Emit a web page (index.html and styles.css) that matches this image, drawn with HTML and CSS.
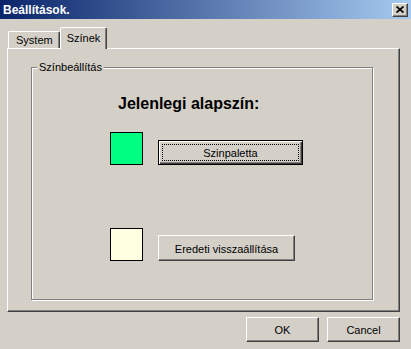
FILE: index.html
```html
<!DOCTYPE html>
<html lang="hu">
<head>
  <meta charset="UTF-8">
  <title>Beállítások.</title>
  <link rel="stylesheet" href="styles.css">
</head>
<body>
  <div class="window">
    <div class="titlebar">
      <div class="caption">Beállítások.</div>
      <div class="close">
        <svg width="8" height="7" viewBox="0 0 8 7"><path d="M0.5 0.5 L7.5 6.5 M7.5 0.5 L0.5 6.5" stroke="#000" stroke-width="1.8" fill="none"/></svg>
      </div>
    </div>
    <div class="content">
      <div class="tabs">
        <div class="tab">System</div>
        <div class="tab active">Színek</div>
      </div>
      <div class="panel">
        <div class="group">
          <div class="legend">Színbeállítás</div>
          <div class="heading">Jelenlegi alapszín:</div>
          <div class="row first">
            <div class="swatch green"></div>
            <div class="btn default wide">Szinpaletta</div>
          </div>
          <div class="row second">
            <div class="swatch cream"></div>
            <div class="btn reset">Eredeti visszaállítása</div>
          </div>
        </div>
      </div>
      <div class="footer">
        <div class="btn small">OK</div>
        <div class="btn small">Cancel</div>
      </div>
    </div>
  </div>
</body>
</html>
```

FILE: styles.css
```css
*{margin: 0; box-sizing: border-box;}
body{
  background: #D4D0C8;
  font-family: "Liberation Sans", Arial, sans-serif;
  font-size: 11px;
  color: #000;
}
.window{
  width: 411px;
  height: 349px;
  overflow: hidden;
}
.titlebar{
  height: 19px;
  display: flex;
  align-items: center;
  justify-content: space-between;
  padding: 0 3px;
  background: linear-gradient(to right, #0A246A, #A6CAF0);
}
.caption{
  color: #fff;font-weight: bold;font-size: 12px;
}
.close{
  width: 16px;
  height: 14px;
  display: flex;
  align-items: center;
  justify-content: center;
  background: #D4D0C8;
  border: 1px solid;
  border-color: #fff #404040 #404040 #fff;
  box-shadow: inset -1px -1px #808080;
}
.content{
  padding: 8px 11px 0 7px;
}
.tabs{
  display: flex;
  align-items: flex-end;
  height: 21px;
  padding-left: 1px;
}
.tab{
  height: 17px;
  padding: 2px 6px 0 7px;
  border: 1px solid;
  border-color: #fff #404040 transparent #fff;
  border-bottom: none;
  border-radius: 2px 2px 0 0;
  box-shadow: inset -1px 0 #808080;
  line-height: 13px;
}
.tab.active{
  height: 22px;
  margin-bottom: -1px;
  padding: 4px 6px 0 6px;
  background: #D4D0C8;
  position: relative;
  z-index: 1;
}
.panel{
  height: 264px;
  display: flex;
  flex-direction: column;
  padding: 18px 26px 11px 23px;
  border: 1px solid;
  border-color: #fff #404040 #404040 #fff;
  box-shadow: inset -1px -1px #808080;
}
.group{
  flex: 1;
  position: relative;
  border: 1px solid #808080;
  box-shadow: inset 1px 1px #fff, 1px 1px #fff;
  padding: 27px 0 0 86px;
}
.legend{
  position: absolute;
  top: -7px;
  left: 5px;
  padding: 0 2px;
  line-height: 13px;
  background: #D4D0C8;
}
.heading{
  font-size: 16px;font-weight: bold;line-height: 18px;
}
.row{
  display: flex;
  align-items: flex-end;
  gap: 15px;
  margin-left: -8px;
}
.row.first{
  margin-top: 19px;
}
.row.second{
  margin-top: 63px;
}
.swatch{
  width: 33px;
  height: 33px;
  border: 1px solid #000;
}
.green{
  background: #00FF80;
}
.cream{
  background: #FFFFE1;
}
.btn{
  display: flex;
  align-items: center;
  justify-content: center;
  height: 26px;
  border: 1px solid;
  border-color: #fff #404040 #404040 #fff;
  box-shadow: inset -1px -1px #808080;
  padding-top: 1px;
}
.btn.default{
  position: relative;
  border-color: #000;
  box-shadow: inset 1px 1px #fff, inset -1px -1px #404040, inset -2px -2px #808080;
}
.btn.default::after{
  content: "";
  position: absolute;
  top: 3px;
  left: 3px;
  right: 3px;
  bottom: 3px;
  border: 1px dotted #000;
}
.wide{
  width: 145px;
  height: 25px;
}
.reset{
  width: 137px;
}
.footer{
  display: flex;
  justify-content: flex-end;
  gap: 8px;
  margin-top: 5px;
}
.btn.small{
  width: 73px;
  height: 25px;
}
```
